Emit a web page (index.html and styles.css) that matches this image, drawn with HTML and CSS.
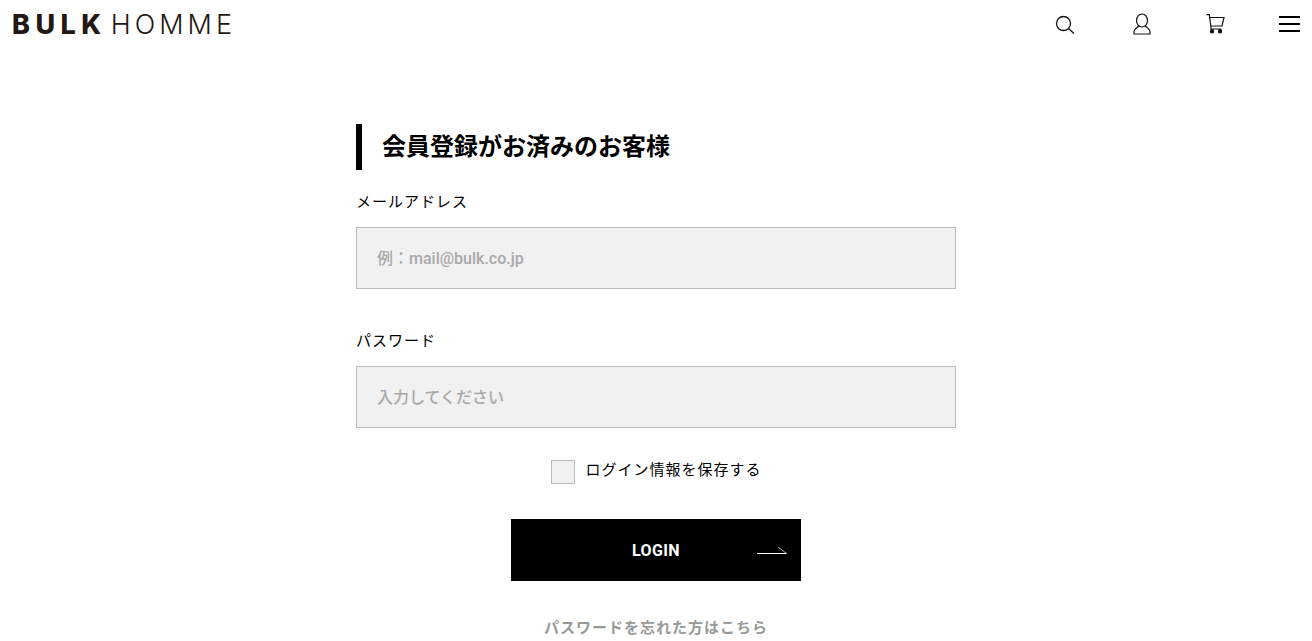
FILE: index.html
```html
<!DOCTYPE html>
<html lang="ja">
<head>
    <meta charset="UTF-8">
    <meta name="viewport" content="width=device-width, initial-scale=1.0">
    <title>BULK HOMME ログイン</title>
    <link rel="stylesheet" href="styles.css">
</head>
<body>
    <div class="header">
        <a href="#" class="logo"><span class="logo-bold">BULK</span><span class="logo-thin">HOMME</span></a>
        <div class="nav">
            <a href="#" class="nav-icon nav-search">
                <svg width="20" height="20" viewBox="0 0 20 20" fill="none" stroke="#111" stroke-width="1.3"><circle cx="8.500" cy="9.500" r="7"/><path d="M13.500 14.500L19 19.500"/></svg>
            </a>
            <a href="#" class="nav-icon nav-user">
                <svg width="18" height="22" viewBox="0 0 18 22" fill="none" stroke="#111" stroke-width="1.2"><ellipse cx="9" cy="7.500" rx="5.500" ry="6.500"/><path d="M5.800 12.500C5 14.800 1 15 1 18.500V21H17V18.500C17 15 13 14.800 12.200 12.500"/></svg>
            </a>
            <a href="#" class="nav-icon nav-cart">
                <svg width="19" height="20" viewBox="0 0 19 20" fill="none" stroke="#111" stroke-width="1.2"><path d="M0.500 0.700H3.300L5.200 15H15.300"/><path d="M3.800 3.500H18L16 12H4.900"/><circle cx="6" cy="17.300" r="1.600" fill="#111"/><circle cx="14" cy="17.300" r="1.600" fill="#111"/></svg>
            </a>
            <a href="#" class="nav-menu">
                <span></span><span></span><span></span>
            </a>
        </div>
    </div>

    <div class="container">
        <h2 class="title">会員登録がお済みのお客様</h2>
        <form>
            <label class="field-label" for="email">メールアドレス</label>
            <input class="field" id="email" type="text" placeholder="例：mail@bulk.co.jp">

            <label class="field-label field-label-second" for="password">パスワード</label>
            <input class="field" id="password" type="password" placeholder="入力してください">

            <label class="remember">
                <input class="remember-box" type="checkbox">
                <span class="remember-text">ログイン情報を保存する</span>
            </label>

            <button class="login-button" type="button">
                LOGIN
                <svg class="login-arrow" width="30" height="8" viewBox="0 0 30 8" fill="none" stroke="#fff"><path d="M0 7.500H29.500"/><path d="M21 1L29.500 7.500" stroke-width="0.7"/></svg>
            </button>
        </form>
        <a href="#" class="forgot">パスワードを忘れた方はこちら</a>
    </div>
</body>
</html>
```

FILE: styles.css
```css
body {
    font-family: "Roboto", "Noto Sans CJK JP", sans-serif;
    margin: 0;
    padding: 0;
    background-color: #fff;
    color: #000;
    overflow: hidden;
}
a {
    text-decoration: none;
    color: inherit;
}
.header {
    display: flex;
    justify-content: space-between;
    align-items: center;
    height: 48px;
    padding: 0 12px 0 12px;
}
.logo {
    display: flex;
    padding-top: 2px;
    font-family: "Inter", "Liberation Sans", sans-serif;
    font-size: 27px;
    line-height: 48px;
    color: #231815;
    white-space: nowrap;
}
.logo-bold {
    font-weight: 800;
    letter-spacing: 5.5px;
    margin-right: 4px;
}
.logo-thin {
    font-weight: 300;
    letter-spacing: 4px;
}
.nav {
    display: flex;
    align-items: center;
}
.nav-icon {
    display: flex;
}
.nav-search {
    margin-right: 58px;
}
.nav-user {
    margin-right: 55px;
}
.nav-cart {
    margin-right: 54px;
}
.nav-menu {
    display: flex;
    flex-direction: column;
    gap: 5px;
    width: 21px;
}
.nav-menu span {
    display: block;
    height: 2px;
    background-color: #000;
}
.container {
    width: 600px;
    margin: 0 auto;
    padding-top: 76px;
}
.title {
    margin: 0 0 20px;
    height: 46px;
    border-left: 6px solid #000;
    padding-left: 20px;
    font-size: 24px;
    font-weight: 700;
    line-height: 46px;
}
.field-label {
    display: block;
    font-size: 15px;
    line-height: 24px;
    letter-spacing: 1px;
    margin-bottom: 13px;
}
.field-label-second {
    margin-top: 40px;
}
.field {
    display: block;
    box-sizing: border-box;
    width: 600px;
    height: 62px;
    padding: 0 20px;
    border: 1px solid #bbb;
    border-radius: 0;
    background-color: #f1f1f1;
    font-family: inherit;
    font-size: 16px;
    font-weight: 500;
}
.field::placeholder {
    color: #a9a9a9;
    opacity: 1;
}
.remember {
    display: flex;
    justify-content: center;
    align-items: center;
    gap: 10px;
    margin-top: 32px;
    padding-left: 1px;
    font-size: 15px;
    letter-spacing: 1px;
    line-height: 24px;
}
.remember-text {
    margin-top: -5px;
}
.remember-box {
    appearance: none;
    box-sizing: border-box;
    width: 24px;
    height: 24px;
    margin: 0;
    border: 1px solid #bbb;
    background-color: #f1f1f1;
}
.login-button {
    display: block;
    position: relative;
    width: 290px;
    height: 62px;
    margin: 35px auto 0;
    border: 0;
    background-color: #000;
    color: #fff;
    font-family: inherit;
    font-size: 16px;
    font-weight: 700;
    letter-spacing: 0.4px;
}
.login-arrow {
    position: absolute;
    right: 14px;
    top: 27px;
}
.forgot {
    display: block;
    margin-top: 35px;
    text-align: center;
    font-size: 15px;
    font-weight: 700;
    letter-spacing: 1px;
    line-height: 24px;
    color: #999;
}
```
